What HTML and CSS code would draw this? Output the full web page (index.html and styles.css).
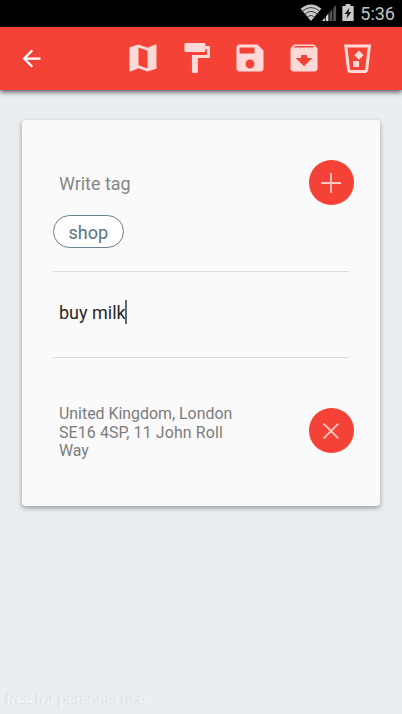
FILE: index.html
```
<!DOCTYPE html>
<html lang="en">
<head>
<meta charset="utf-8">
<title>Note</title>
<link rel="stylesheet" href="styles.css">
</head>
<body>
<div class="status">
  <svg class="wifi" viewBox="0 0 22 18"><path d="M0 5Q11-4 22 5L11 18Z" fill="#c9c9c9"/><path d="M2 7.500Q11 0 20 7.500M4.500 10.700Q11 5 17.500 10.700M7 14Q11 10.500 15 14" fill="none" stroke="#222" stroke-width=".9"/></svg>
  <svg class="signal" viewBox="0 0 16 18"><path d="M15 1V18H0Z" fill="#505050"/><path d="M7 10V18H0Z" fill="#ddd"/><path d="M3.500 12V18M7.500 8V18M11.500 4V18" stroke="#000"/></svg>
  <svg class="battery" viewBox="0 0 12 18"><path d="M3.500 0H8.500V2H12V18H0V2H3.500Z" fill="#c9c9c9"/><path d="M7.500 4L2.300 10.500H5.300L4.300 15.500L9.700 8.500H6.700Z" fill="#222"/></svg>
  <span class="clock">5:36</span>
</div>
<header class="bar">
  <svg class="back" viewBox="0 0 24 24"><path d="M20 11H7.830l5.590-5.590L12 4l-8 8 8 8 1.410-1.410L7.830 13H20z"/></svg>
  <nav class="actions">
    <svg viewBox="0 0 24 24"><path d="M20.500 3l-.160.030L15 5.100 9 3 3.360 4.900c-.210.070-.360.250-.360.480V20.500c0 .280.220.500.500.500l.160-.030L9 18.900l6 2.100 5.640-1.900c.210-.070.360-.250.360-.480V3.500c0-.280-.220-.500-.500-.500zM15 19l-6-2.110V5l6 2.110V19z"/></svg>
    <svg viewBox="0 0 24 24"><path d="M18 4V3c0-.550-.450-1-1-1H5c-.550 0-1 .450-1 1v4c0 .550.450 1 1 1h12c.550 0 1-.450 1-1V6h1v4H9v11c0 .550.450 1 1 1h2c.550 0 1-.450 1-1v-9h8V4h-3z" transform="translate(.3)"/></svg>
    <svg viewBox="0 0 24 24"><path d="M17 3H5c-1.110 0-2 .900-2 2v14c0 1.100.890 2 2 2h14c1.100 0 2-.900 2-2V7l-4-4zm-5 16c-1.660 0-3-1.340-3-3s1.340-3 3-3 3 1.340 3 3-1.340 3-3 3zm3-10H5V5h10v4z"/></svg>
    <svg viewBox="0 0 24 24"><path d="M20.540 5.230l-1.390-1.680C18.880 3.210 18.470 3 18 3H6c-.470 0-.880.210-1.160.550L3.460 5.230C3.170 5.570 3 6.020 3 6.500V19c0 1.100.900 2 2 2h14c1.100 0 2-.900 2-2V6.500c0-.480-.170-.930-.460-1.270zM12 17.500L6.500 12H10v-2h4v2h3.500L12 17.500zM5.120 5l.810-1h12l.940 1H5.120z"/></svg>
    <svg viewBox="0 0 24 24"><g transform="translate(.4)"><path fill-rule="evenodd" d="M3 3H21L19 20.200C18.870 21.200 18 22 17 22H7C6 22 5.130 21.200 5 20.200ZM5.250 5L7 20H17L18.750 5Z"/><path d="M12.900 7L16 10.100 12.900 13.200 9.800 10.100ZM9 14H13V18H9Z"/></g></svg>
  </nav>
</header>
<main class="card">
  <section class="tags">
    <div class="row">
      <span class="hint">Write tag</span>
      <button class="round" aria-label="Add"><svg viewBox="0 0 20 20"><path d="M10 0V20M0 10H20"/></svg></button>
    </div>
    <span class="chip">shop</span>
  </section>
  <section class="note"><span class="text">buy milk</span><i class="caret"></i></section>
  <section class="place">
    <p class="address">United Kingdom, London<br><span class="wide">SE16 4SP, 11 John Roll</span><br>Way</p>
    <button class="round" aria-label="Remove"><svg viewBox="0 0 20 20"><path d="M2.700 2.700L17.300 17.300M17.300 2.700L2.700 17.300"/></svg></button>
  </section>
</main>
<footer class="mark">free for personal use</footer>
</body>
</html>
```
FILE: styles.css
```
* { box-sizing: border-box; }
body {
  margin: 0;
  width: 402px;
  height: 714px;
  display: flex;
  flex-direction: column;
  overflow: hidden;
  background: #eaeef1;
  font-family: Roboto, "Liberation Sans", sans-serif;
}
.status {
  height: 27px;
  flex: none;
  display: flex;
  align-items: flex-start;
  justify-content: flex-end;
  padding: 4px 7px 0 0;
  background: #000;
}
.wifi { width: 22px; height: 17px; }
.signal { width: 15px; height: 17px; margin-right: 5px; }
.battery { width: 12px; height: 17px; margin-right: 6px; }
.clock { color: #c2c2c2; font-size: 18px; line-height: 19px; }
.bar {
  height: 63px;
  flex: none;
  display: flex;
  align-items: center;
  justify-content: space-between;
  padding: 0 18px .7px 17.6px;
  background: #f44336;
  box-shadow: 0 2px 5px rgba(0, 0, 0, .65);
}
.back { width: 27px; height: 27px; fill: #fff; }
.actions { display: flex; }
.actions svg { width: 36px; height: 36px; margin: 0 8.8px; fill: #ffd9d7; }
.card {
  width: 358px;
  height: 386px;
  flex: none;
  margin: 30px 0 0 22px;
  padding: 40px 26px 0 31px;
  border-radius: 4px;
  background: #fafafa;
  box-shadow: 0 2px 5px rgba(0, 0, 0, .36);
}
.tags, .note { width: 296px; border-bottom: 1px solid #dcdddd; }
.tags { height: 112px; }
.row {
  width: 300.5px;
  height: 45px;
  display: flex;
  align-items: center;
  justify-content: space-between;
  padding-left: 6px;
}
.hint { padding-top: 1px; color: #858585; font-size: 17.9px; }
.round {
  width: 44.5px;
  height: 44.5px;
  display: flex;
  align-items: center;
  justify-content: center;
  flex: none;
  padding: 0;
  border: 0;
  border-radius: 50%;
  background: #f44336;
}
.round svg { width: 20px; height: 20px; stroke: #ffc9c5; stroke-width: 1.8; }
.chip {
  width: 70.5px;
  height: 32.5px;
  display: flex;
  align-items: center;
  justify-content: center;
  margin-top: 10px;
  padding-top: 2px;
  border: 1px solid #66808d;
  border-radius: 17px;
  background: #fff;
  color: #5b7480;
  font-size: 18px;
}
.note { height: 86px; display: flex; padding: 28px 0 0 6px; }
.text { color: #282828; font-size: 18px; line-height: 26px; }
.caret { width: 2px; height: 24px; margin-left: -.5px; background: #546e7a; }
.place {
  width: 300.5px;
  display: flex;
  justify-content: space-between;
  padding: 50.3px 0 0 6px;
}
.address { margin: -3.3px 0 0; color: #7c7c7c; font-size: 15.9px; line-height: 18.5px; white-space: nowrap; }
.wide { letter-spacing: .14px; }
.mark {
  margin-top: auto;
  padding: 0 0 5px 5px;
  color: #e8ecef;
  font-size: 15.8px;
  font-weight: 300;
  line-height: 19px;
  letter-spacing: -.1px;
  text-shadow: 1px 1px 0 #f3f6f8, -1px 0 0 #d9dddf;
}
```
